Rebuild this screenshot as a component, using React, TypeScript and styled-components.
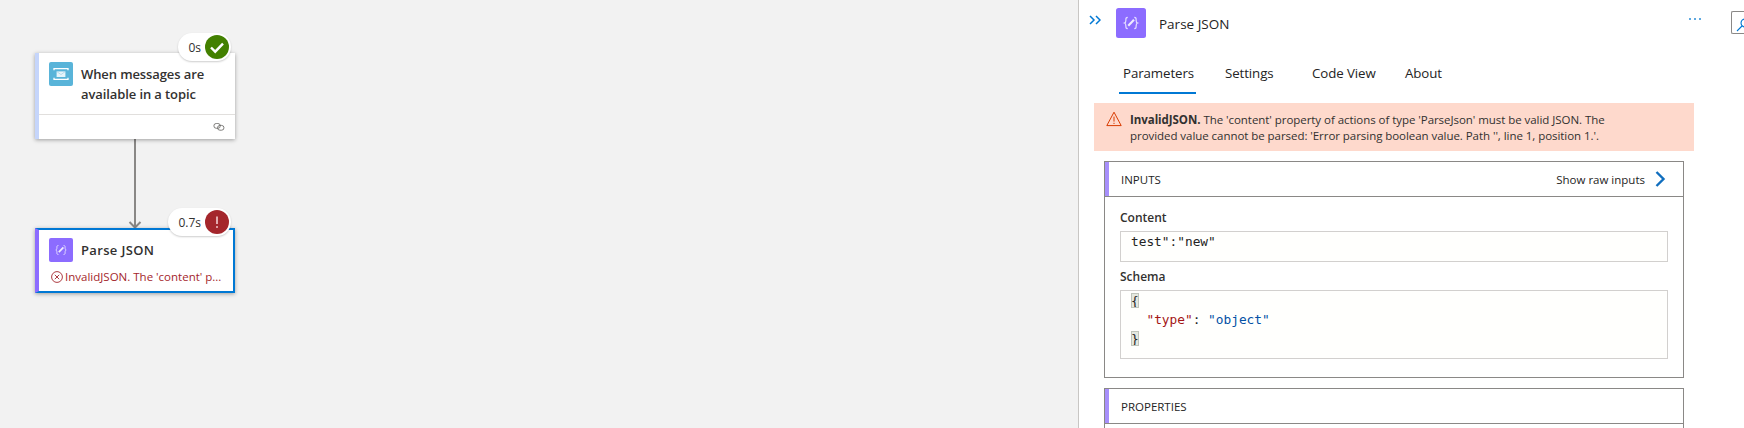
import React from 'react';
import styled, { createGlobalStyle } from 'styled-components';

const GlobalStyle = createGlobalStyle`
  html, body {
    margin: 0;
    padding: 0;
    overflow: hidden;
    font-family: "Open Sans", "Noto Sans", sans-serif;
    color: #242424;
  }
`;

const ServiceBusIcon = () => (
  <svg width="24" height="24" viewBox="0 0 24 24">
    <rect width="24" height="24" rx="2" fill="#59b4d9" />
    <path d="M5 8.2V6.6h14v1.6M5 15.8v1.6h14v-1.6" fill="none" stroke="#fff" strokeWidth="1.3" />
    <rect x="7.6" y="9.4" width="8.8" height="5.6" fill="#e6f4fa" />
    <path d="M7.8 9.6l4.2 3 4.2-3" fill="none" stroke="#9fd3e8" strokeWidth="0.7" />
  </svg>
);

const ParseIcon = ({ size }: { size: number }) => (
  <svg width={size} height={size} viewBox="0 0 24 24">
    <rect width="24" height="24" rx="2" fill="#8c6cff" />
    <path
      d="M9.4 7.5c-1.6 0-1.5 1-1.5 2.2 0 1.3-.2 2-1.1 2.3.9.3 1.1 1 1.1 2.3 0 1.2-.1 2.2 1.5 2.2M14.6 7.5c1.6 0 1.5 1 1.5 2.2 0 1.3.2 2 1.1 2.3-.9.3-1.1 1-1.1 2.3 0 1.2.1 2.2-1.5 2.2"
      fill="none"
      stroke="#e4dcff"
      strokeWidth="1"
    />
    <path d="M9.8 14.2l4.6-4.8" stroke="#efeaff" strokeWidth="1.7" />
  </svg>
);

const CheckBadgeIcon = () => (
  <svg width="24" height="24" viewBox="0 0 24 24">
    <circle cx="12" cy="12" r="12" fill="#428000" />
    <path d="M6 12.5l4.2 4.2L18 8.6" fill="none" stroke="#fff" strokeWidth="2.4" />
  </svg>
);

const ErrorBadgeIcon = () => (
  <svg width="24" height="24" viewBox="0 0 24 24">
    <circle cx="12" cy="12" r="12" fill="#a4262c" />
    <path d="M12 6.5v7.5" stroke="#eec4c7" strokeWidth="1.7" />
    <circle cx="12" cy="17" r="1" fill="#eec4c7" />
  </svg>
);

const LinkIcon = () => (
  <svg width="12" height="8" viewBox="0 0 14 10" fill="none" stroke="#605e5c" strokeWidth="1">
    <rect x="0.6" y="0.6" width="8" height="6" rx="3" />
    <rect x="5.2" y="3" width="8" height="6" rx="3" />
  </svg>
);

const ErrorCircleIcon = () => (
  <svg width="12" height="12" viewBox="0 0 12 12" fill="none" stroke="#a4262c" strokeWidth="0.9">
    <circle cx="6" cy="6" r="5.4" />
    <path d="M3.8 3.8l4.4 4.4M8.2 3.8L3.8 8.2" />
  </svg>
);

const Page = styled.div`
  width: 1744px;
  height: 428px;
  display: flex;
  overflow: hidden;
`;

const Canvas = styled.div`
  position: relative;
  width: 1078px;
  flex: none;
  background: #f2f2f2;
`;

const Node = styled.div<{ $left: number; $top: number; $height: number; $accent: string; $selected?: boolean }>`
  position: absolute;
  left: ${(p) => p.$left}px;
  top: ${(p) => p.$top}px;
  width: 200px;
  height: ${(p) => p.$height}px;
  box-sizing: border-box;
  display: flex;
  flex-direction: column;
  background: #fff;
  border-left: 4px solid ${(p) => p.$accent};
  ${(p) =>
    p.$selected
      ? `border-top: 2px solid #0078d4; border-right: 2px solid #0078d4; border-bottom: 2px solid #0078d4;`
      : ''}
  box-shadow: 0 1px 4px rgba(0, 0, 0, 0.35);
`;

const NodeHead = styled.div<{ $padTop: number; $height: number }>`
  display: flex;
  gap: 8px;
  height: ${(p) => p.$height}px;
  box-sizing: border-box;
  padding: ${(p) => p.$padTop}px 10px 0 10px;
`;

const NodeTitle = styled.div<{ $single?: boolean }>`
  font-size: 13px;
  font-weight: 600;
  line-height: 20px;
  color: #323130;
  letter-spacing: ${(p) => (p.$single ? '0.35px' : '-0.1px')};
  margin-top: 2px;
`;

const NodeFooter = styled.div`
  flex: 1;
  border-top: 1px solid #e1dfdd;
  display: flex;
  align-items: center;
  justify-content: flex-end;
  padding-right: 10px;
`;

const NodeError = styled.div`
  display: flex;
  align-items: center;
  gap: 2px;
  padding: 7px 0 0 12px;
  font-size: 11.5px;
  line-height: 16px;
  color: #a4262c;
  white-space: nowrap;
`;

const StatusBadge = styled.div<{ $left: number; $top: number; $width: number }>`
  position: absolute;
  left: ${(p) => p.$left}px;
  top: ${(p) => p.$top}px;
  width: ${(p) => p.$width}px;
  height: 28px;
  box-sizing: border-box;
  display: flex;
  align-items: center;
  justify-content: flex-end;
  gap: 4px;
  padding-right: 2px;
  background: #fff;
  border-radius: 14px;
  box-shadow: 0 1px 2px rgba(0, 0, 0, 0.2);
  font-size: 12px;
  color: #323130;
`;

const Edge = styled.svg`
  position: absolute;
  left: 127px;
  top: 139px;
`;

const Panel = styled.div`
  flex: 1;
  min-width: 0;
  position: relative;
  background: #fff;
  border-left: 1px solid #c8c6c4;
`;

const PanelHeader = styled.div`
  display: flex;
  align-items: center;
  height: 46px;
  box-sizing: border-box;
  padding: 0 0 0 10px;
`;

const CollapseButton = styled.svg`
  flex: none;
  margin-right: 15px;
  margin-top: -6px;
`;

const PanelTitle = styled.div`
  margin-left: 13px;
  margin-top: 2px;
  font-size: 13.5px;
  color: #242424;
`;

const MoreDots = styled.div`
  margin-left: auto;
  margin-right: 30px;
  margin-top: -8px;
  display: flex;
  gap: 3px;
`;

const Dot = styled.span`
  width: 2px;
  height: 2px;
  background: #5ea9e0;
`;

const SearchBox = styled.div`
  width: 13px;
  height: 23px;
  box-sizing: border-box;
  margin-top: -1px;
  border: 1px solid #8a8886;
  border-right: 0;
  border-radius: 2px 0 0 2px;
  overflow: hidden;
  padding: 3px 0 0 4px;
`;

const Tabs = styled.div`
  display: flex;
  height: 48px;
  padding-left: 40px;
  box-sizing: border-box;
  padding-top: 6px;
`;

const Tab = styled.div<{ $active?: boolean; $width: number }>`
  width: ${(p) => p.$width}px;
  height: 42px;
  box-sizing: border-box;
  font-size: 13.3px;
  line-height: 42px;
  padding-left: 4px;
  color: #242424;
  letter-spacing: -0.1px;
  ${(p) => (p.$active ? 'box-shadow: inset 0 -2px 0 #0078d4;' : '')}
`;

const TabSlot = styled.div<{ $width: number }>`
  width: ${(p) => p.$width}px;
`;

const Banner = styled.div`
  display: flex;
  width: 600px;
  height: 48px;
  margin: 9px 0 0 15px;
  box-sizing: border-box;
  padding: 9px 0 0 12px;
  gap: 8px;
  background: #fed9cc;
`;

const BannerIcon = styled.svg`
  flex: none;
  margin-top: -1px;
`;

const BannerText = styled.div`
  font-size: 11.5px;
  line-height: 16px;
  color: #323130;
  letter-spacing: -0.05px;
  b {
    font-weight: 700;
  }
`;

const Section = styled.div<{ $marginTop: number }>`
  width: 580px;
  margin: ${(p) => p.$marginTop}px 0 0 25px;
  box-sizing: border-box;
  border: 1px solid #8a8886;
`;

const SectionHeader = styled.div`
  height: 34px;
  display: flex;
  align-items: center;
  justify-content: space-between;
  padding: 0 17px 0 16px;
  box-shadow: inset 4px 0 0 #a78ffb;
  font-size: 11.5px;
  color: #242424;
`;

const ShowRaw = styled.div`
  display: flex;
  align-items: center;
  gap: 10px;
`;

const SectionBody = styled.div`
  border-top: 1px solid #8a8886;
  padding: 11px 15px 18px 15px;
`;

const FieldLabel = styled.div<{ $spaced?: boolean }>`
  font-size: 12px;
  font-weight: 600;
  line-height: 20px;
  color: #323130;
  margin-top: ${(p) => (p.$spaced ? '5px' : '0')};
  margin-bottom: 3px;
`;

const CodeField = styled.div<{ $height: number }>`
  height: ${(p) => p.$height}px;
  box-sizing: border-box;
  border: 1px solid #d2d0ce;
  background: #fffffd;
  padding: 0 0 0 10px;
  font-family: "DejaVu Sans Mono", "Liberation Mono", monospace;
  font-size: 12.8px;
  line-height: 19px;
  color: #242424;
  white-space: pre;
`;

const Bracket = styled.span`
  background: #e4e8df;
  outline: 1px solid #bfc4bb;
  outline-offset: -1px;
`;

const JsonKey = styled.span`
  color: #a31515;
`;

const JsonValue = styled.span`
  color: #0451a5;
`;

const Chevrons = () => (
  <CollapseButton width="12" height="10" viewBox="0 0 12 10" fill="none" stroke="#0078d4" strokeWidth="1.5">
    <path d="M1 1l4 4-4 4M7 1l4 4-4 4" />
  </CollapseButton>
);

export default function App() {
  return (
    <>
      <GlobalStyle />
      <Page>
        <Canvas>
          <Edge width="16" height="90" viewBox="0 0 16 90" fill="none" stroke="#8a8886">
            <path d="M8 0v88" strokeWidth="2" />
            <path d="M2.5 83L8 88.5 13.5 83" strokeWidth="2" />
          </Edge>
          <Node $left={35} $top={53} $height={86} $accent="#c5d5fb">
            <NodeHead $padTop={9} $height={61}>
              <ServiceBusIcon />
              <NodeTitle>
                When messages are
                <br />
                available in a topic
              </NodeTitle>
            </NodeHead>
            <NodeFooter>
              <LinkIcon />
            </NodeFooter>
          </Node>
          <StatusBadge $left={178} $top={33} $width={53}>
            0s
            <CheckBadgeIcon />
          </StatusBadge>
          <Node $left={35} $top={228} $height={65} $accent="#8c6cff" $selected>
            <NodeHead $padTop={8} $height={32}>
              <ParseIcon size={24} />
              <NodeTitle $single>Parse JSON</NodeTitle>
            </NodeHead>
            <NodeError>
              <ErrorCircleIcon />
              InvalidJSON. The 'content' p...
            </NodeError>
          </Node>
          <StatusBadge $left={168} $top={208} $width={63}>
            0.7s
            <ErrorBadgeIcon />
          </StatusBadge>
        </Canvas>
        <Panel>
          <PanelHeader>
            <Chevrons />
            <ParseIcon size={30} />
            <PanelTitle>Parse JSON</PanelTitle>
            <MoreDots>
              <Dot />
              <Dot />
              <Dot />
            </MoreDots>
            <SearchBox>
              <svg width="14" height="14" viewBox="0 0 14 14" fill="none" stroke="#0078d4" strokeWidth="1.1">
                <circle cx="9" cy="5" r="4" />
                <path d="M6 8l-5 5" />
              </svg>
            </SearchBox>
          </PanelHeader>
          <Tabs>
            <Tab $active $width={77}>
              Parameters
            </Tab>
            <TabSlot $width={25} />
            <Tab $width={87}>Settings</Tab>
            <Tab $width={93}>Code View</Tab>
            <Tab $width={60}>About</Tab>
          </Tabs>
          <Banner>
            <BannerIcon width="16" height="16" viewBox="0 0 16 16" fill="none" stroke="#d83b01" strokeWidth="1">
              <path d="M8 1.2L15.2 14.6H.8z" strokeLinejoin="round" />
              <path d="M8 5.6v5M8 11.8v1.2" />
            </BannerIcon>
            <BannerText>
              <b>InvalidJSON.</b> The 'content' property of actions of type 'ParseJson' must be valid JSON. The
              <br />
              provided value cannot be parsed: 'Error parsing boolean value. Path '', line 1, position 1.'.
            </BannerText>
          </Banner>
          <Section $marginTop={10}>
            <SectionHeader>
              INPUTS
              <ShowRaw>
                Show raw inputs
                <svg width="11" height="16" viewBox="0 0 11 16" fill="none" stroke="#106ebe" strokeWidth="2.4">
                  <path d="M1.5 1l7 7-7 7" />
                </svg>
              </ShowRaw>
            </SectionHeader>
            <SectionBody>
              <FieldLabel>Content</FieldLabel>
              <CodeField $height={31}>test":"new"</CodeField>
              <FieldLabel $spaced>Schema</FieldLabel>
              <CodeField $height={69}>
                <Bracket>{'{'}</Bracket>
                {'\n  '}
                <JsonKey>"type"</JsonKey>: <JsonValue>"object"</JsonValue>
                {'\n'}
                <Bracket>{'}'}</Bracket>
              </CodeField>
            </SectionBody>
          </Section>
          <Section $marginTop={10}>
            <SectionHeader>PROPERTIES</SectionHeader>
            <SectionBody />
          </Section>
        </Panel>
      </Page>
    </>
  );
}
